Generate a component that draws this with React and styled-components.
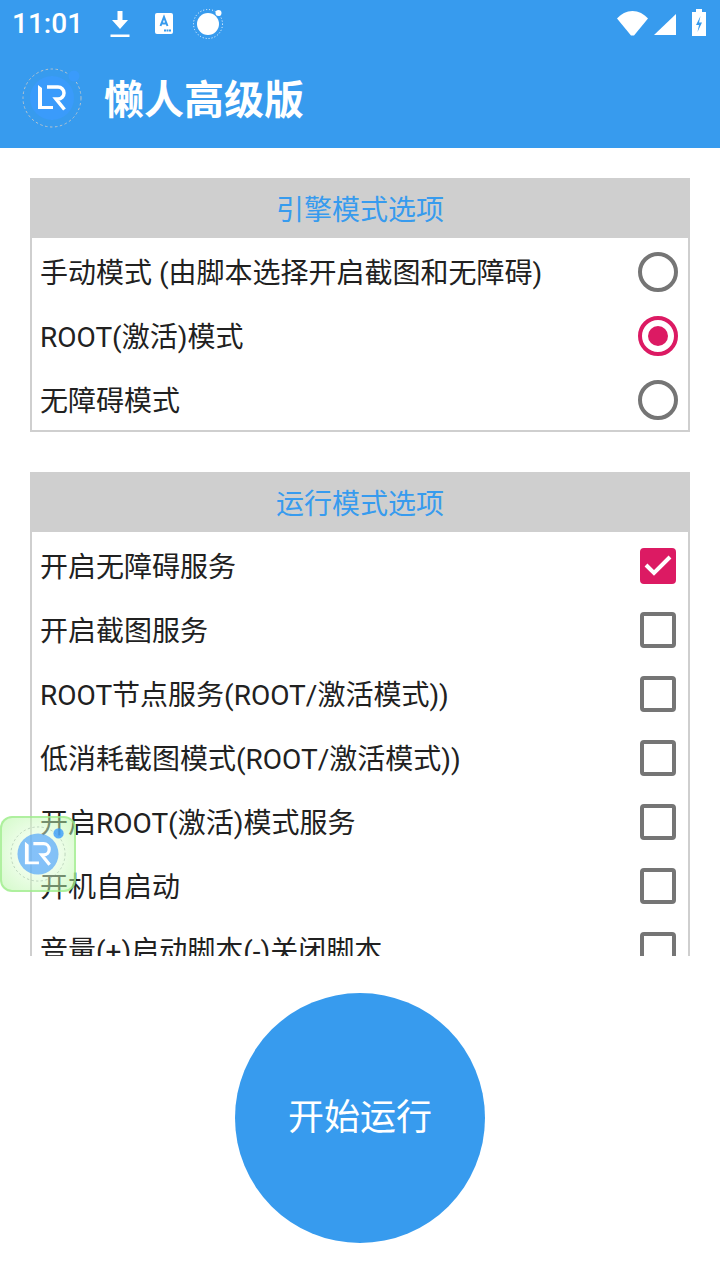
import styled, { createGlobalStyle } from "styled-components";
import { useState } from "react";

const FONT = `Roboto, "Noto Sans CJK SC", sans-serif`;

const GlobalStyle = createGlobalStyle`
  html, body {
    margin: 0;
    padding: 0;
    background: #fff;
  }
  * {
    box-sizing: border-box;
  }
`;

const Screen = styled.div`
  position: relative;
  width: 720px;
  height: 1280px;
  display: flex;
  flex-direction: column;
  overflow: hidden;
  background: #fff;
  font-family: ${FONT};
  color: #212121;
`;

const Header = styled.header`
  height: 148px;
  flex: none;
  background: #379bee;
  color: #fff;
`;

const StatusBar = styled.div`
  height: 48px;
  padding: 0 14px 0 12px;
  display: flex;
  align-items: center;
  justify-content: space-between;
`;

const StatusGroup = styled.div`
  display: flex;
  align-items: center;
`;

const Clock = styled.span`
  font-size: 28px;
  font-weight: 500;
  line-height: 48px;
  margin-right: 25px;
`;

const StatusIcon = styled.svg`
  display: block;
  flex: none;
  margin-left: ${(p) => p.$gap || 0}px;
  margin-top: ${(p) => p.$lift || 0}px;
`;

const AppBar = styled.div`
  height: 100px;
  padding-left: 22px;
  display: flex;
  align-items: center;
  gap: 22px;
`;

const Title = styled.h1`
  margin: 6px 0 0;
  font-size: 40px;
  font-weight: 700;
  line-height: 56px;
`;

const Scroll = styled.main`
  height: 808px;
  flex: none;
  overflow: hidden;
  padding: 30px 30px 0;
  display: flex;
  flex-direction: column;
  gap: 40px;
`;

const Panel = styled.section`
  flex: none;
  border: 2px solid #cfcfcf;
  border-top: 0;
`;

const PanelTitle = styled.div`
  height: 60px;
  margin: 0 -2px 2px;
  padding-top: 3px;
  background: #cfcfcf;
  color: #379bee;
  font-size: 28px;
  line-height: 60px;
  text-align: center;
`;

const Row = styled.div`
  height: 64px;
  padding: 0 10px 0 8px;
  display: flex;
  align-items: center;
  justify-content: space-between;
  font-size: 28px;
  &:last-child {
    margin-bottom: -2px;
  }
`;

const RowLabel = styled.span`
  margin-bottom: 2px;
  white-space: nowrap;
`;

const Radio = styled.span`
  width: 40px;
  height: 40px;
  flex: none;
  border-radius: 50%;
  border: 4px solid ${(p) => (p.$on ? "#dc1a63" : "#757575")};
  display: flex;
  align-items: center;
  justify-content: center;
  &::after {
    content: "";
    width: 20px;
    height: 20px;
    border-radius: 50%;
    background: ${(p) => (p.$on ? "#dc1a63" : "transparent")};
  }
`;

const Check = styled.span`
  width: 36px;
  height: 36px;
  margin-right: 2px;
  flex: none;
  border-radius: 4px;
  border: 4px solid ${(p) => (p.$on ? "#dc1a63" : "#757575")};
  background: ${(p) => (p.$on ? "#dc1a63" : "transparent")};
  display: flex;
  align-items: center;
  justify-content: center;
`;

const Footer = styled.footer`
  flex: 1;
  display: flex;
  align-items: flex-start;
  justify-content: center;
  padding-top: 37px;
`;

const StartButton = styled.button`
  width: 250px;
  height: 250px;
  border: 0;
  padding: 0 0 8px;
  border-radius: 50%;
  background: #379bee;
  color: #fff;
  font-family: ${FONT};
  font-size: 36px;
  cursor: pointer;
`;

const FloatBall = styled.div`
  position: absolute;
  left: 0;
  top: 816px;
  width: 76px;
  height: 76px;
  border-radius: 12px;
  border: 2px solid rgba(150, 235, 130, 0.65);
  background: radial-gradient(circle, rgba(240, 255, 235, 0.5) 20%, rgba(170, 245, 150, 0.5) 100%);
  display: flex;
  align-items: center;
  justify-content: center;
`;

const DownloadIcon = () => (
  <StatusIcon width="24" height="30" viewBox="0 0 24 30">
    <path d="M9.500 2h5v9H20l-8 9-8-9h5.500z" fill="#fff" />
    <rect x="2.500" y="25.500" width="19" height="2.500" fill="#fff" />
  </StatusIcon>
);

const TranslateIcon = () => (
  <StatusIcon $gap={23} $lift={-1} width="18" height="21" viewBox="0 0 18 21">
    <rect width="18" height="21" rx="2" fill="#fff" />
    <path d="M5.500 13 9 4l3.500 9M6.800 10.500h4.400" fill="none" stroke="#379bee" strokeWidth="2" />
    <path d="M9 17.500h7" stroke="#379bee" strokeWidth="2" strokeDasharray="2 .5" />
  </StatusIcon>
);

const OrbitIcon = () => (
  <StatusIcon $gap={20} $lift={-3} width="32" height="32" viewBox="0 0 32 32">
    <circle cx="15" cy="17" r="14.500" fill="none" stroke="#fff" strokeWidth="1" strokeDasharray="1 2" />
    <circle cx="15" cy="17" r="11" fill="#fff" />
    <circle cx="25.500" cy="6" r="3" fill="#fff" />
  </StatusIcon>
);

const WifiIcon = () => (
  <StatusIcon $lift={-1} width="31" height="25" viewBox="0 0 31 25">
    <path d="M0 7.500C4 3 9.500 0 15.500 0S27 3 31 7.500L17 24.500h-3z" fill="#fff" />
  </StatusIcon>
);

const SignalIcon = () => (
  <StatusIcon $gap={6} $lift={1} width="22" height="21" viewBox="0 0 22 21">
    <path d="M0 21 22 0v21z" fill="#fff" />
  </StatusIcon>
);

const BatteryIcon = () => (
  <StatusIcon $gap={16} $lift={-3} width="14" height="27" viewBox="0 0 14 27">
    <path d="M4 0h6v3h4v24H0V3h4z" fill="#fff" />
    <path d="M8.500 7 4 16h3l-1.500 7L10 13.500H7z" fill="#379bee" />
  </StatusIcon>
);

const Logo = ({ size, base, ring, dot }) => (
  <svg width={size} height={size} viewBox="0 0 60 60">
    <circle cx="30" cy="30" r="29" fill="none" stroke={ring} strokeWidth="1" strokeDasharray="2.500 2.500" />
    <circle cx="30" cy="30" r="22" fill={base} />
    <circle cx="52" cy="8" r="5.500" fill={dot} />
    <path d="M16 17l4 3v18h11v3H16z" fill="#fff" />
    <path d="M25 19h11a6 6 0 0 1 0 12h-2l8.500 10.500" fill="none" stroke="#fff" strokeWidth="3.500" />
  </svg>
);

const engineModes = ["手动模式 (由脚本选择开启截图和无障碍)", "ROOT(激活)模式", "无障碍模式"];

const runModes = [
  "开启无障碍服务",
  "开启截图服务",
  "ROOT节点服务(ROOT/激活模式))",
  "低消耗截图模式(ROOT/激活模式))",
  "开启ROOT(激活)模式服务",
  "开机自启动",
  "音量(+)启动脚本(-)关闭脚本",
];

const App = () => {
  const [engine, setEngine] = useState(1);
  const [checked, setChecked] = useState([0]);

  const toggle = (i) =>
    setChecked((list) => (list.includes(i) ? list.filter((n) => n !== i) : [...list, i]));

  return (
    <Screen>
      <GlobalStyle />
      <Header>
        <StatusBar>
          <StatusGroup>
            <Clock>11:01</Clock>
            <DownloadIcon />
            <TranslateIcon />
            <OrbitIcon />
          </StatusGroup>
          <StatusGroup>
            <WifiIcon />
            <SignalIcon />
            <BatteryIcon />
          </StatusGroup>
        </StatusBar>
        <AppBar>
          <Logo size={60} base="#3a9bfb" ring="#b5c4cf" dot="#3a9bfb" />
          <Title>懒人高级版</Title>
        </AppBar>
      </Header>
      <Scroll>
        <Panel>
          <PanelTitle>引擎模式选项</PanelTitle>
          {engineModes.map((label, i) => (
            <Row key={label} onClick={() => setEngine(i)}>
              <RowLabel>{label}</RowLabel>
              <Radio $on={engine === i} />
            </Row>
          ))}
        </Panel>
        <Panel>
          <PanelTitle>运行模式选项</PanelTitle>
          {runModes.map((label, i) => (
            <Row key={label} onClick={() => toggle(i)}>
              <RowLabel>{label}</RowLabel>
              <Check $on={checked.includes(i)}>
                {checked.includes(i) && (
                  <svg width="28" height="28" viewBox="0 0 28 28">
                    <path d="M2 13l8 8L26 5" fill="none" stroke="#fff" strokeWidth="4" />
                  </svg>
                )}
              </Check>
            </Row>
          ))}
        </Panel>
      </Scroll>
      <Footer>
        <StartButton>开始运行</StartButton>
      </Footer>
      <FloatBall>
        <Logo size={56} base="rgba(70,160,250,0.65)" ring="rgba(120,150,130,0.4)" dot="rgba(58,155,251,0.8)" />
      </FloatBall>
    </Screen>
  );
};

export default App;
